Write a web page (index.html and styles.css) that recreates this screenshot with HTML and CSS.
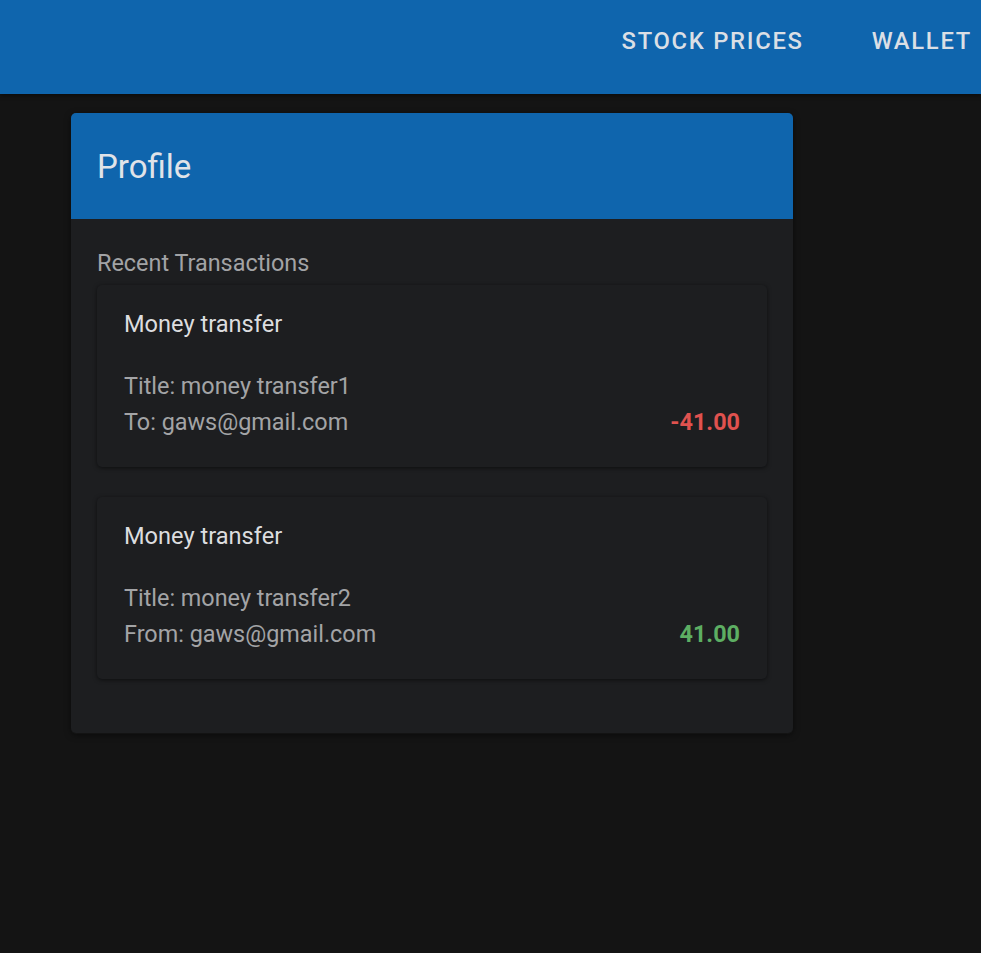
FILE: index.html
```html
<!DOCTYPE html>
<html lang="en">
<head>
<meta charset="utf-8">
<title>Profile</title>
<link rel="stylesheet" href="styles.css">
</head>
<body>
<header class="topbar">
  <nav class="nav">
    <a class="nav-link" href="#">Stock prices</a>
    <a class="nav-link" href="#">Wallet</a>
  </nav>
</header>
<main class="main">
  <section class="profile-card">
    <div class="profile-head"><h1 class="profile-title">Profile</h1></div>
    <div class="profile-body">
      <div class="section-label">Recent Transactions</div>
      <div class="tx-list">
        <article class="tx">
          <div class="tx-type">Money transfer</div>
          <div class="tx-row">
            <div class="tx-info">
              <div>Title: money transfer1</div>
              <div>To: gaws@gmail.com</div>
            </div>
            <div class="tx-amount neg">-41.00</div>
          </div>
        </article>
        <article class="tx">
          <div class="tx-type">Money transfer</div>
          <div class="tx-row">
            <div class="tx-info">
              <div>Title: money transfer2</div>
              <div>From: gaws@gmail.com</div>
            </div>
            <div class="tx-amount pos">41.00</div>
          </div>
        </article>
      </div>
    </div>
  </section>
</main>
</body>
</html>
```
FILE: styles.css
```css
* { box-sizing: border-box; }
html, body { margin: 0; padding: 0; }
body {
  background: #141414;
  font-family: Roboto, "Liberation Sans", sans-serif;
  color: #dcdcdc;
  min-height: 953px;
  overflow: hidden;
}
.topbar {
  height: 94px;
  background: #0f65ad;
  display: flex;
  justify-content: flex-end;
  box-shadow: 0 2px 4px rgba(0,0,0,0.4);
}
.nav {
  display: flex;
  align-items: center;
  height: 82px;
  margin-right: -25px;
}
.nav-link {
  color: #dadfe5;
  text-decoration: none;
  text-transform: uppercase;
  font-weight: 500;
  font-size: 23.8px;
  letter-spacing: 1.7px;
  padding: 0 34px;
}
.main {
  padding: 19px 0 0 71px;
}
.profile-card {
  width: 722px;
  background: #1d1e20;
  border-radius: 5px;
  overflow: hidden;
  box-shadow: 0 2px 6px rgba(0,0,0,0.5), 0 1px 0 rgba(255,255,255,0.04);
}
.profile-head {
  background: #0f65ad;
  height: 106px;
  display: flex;
  align-items: center;
  padding-left: 26px;
  padding-top: 1px;
}
.profile-title {
  margin: 0;
  font-weight: 400;
  font-size: 33px;
  color: #e0e3e8;
}
.profile-body {
  padding: 30px 26px 54px;
}
.section-label {
  font-size: 23.4px;
  color: #a2a3a5;
  line-height: 28px;
}
.tx-list {
  display: flex;
  flex-direction: column;
  gap: 30px;
  margin-top: 8px;
}
.tx {
  background: #1d1e20;
  border-radius: 5px;
  height: 182px;
  padding: 24px 27px 0 27px;
  box-shadow: 0 1px 4px rgba(0,0,0,0.55);
}
.tx-type {
  font-size: 23.6px;
  font-weight: 400;
  color: #dcdddf;
  line-height: 30px;
}
.tx-row {
  display: flex;
  justify-content: space-between;
  align-items: flex-end;
  margin-top: 29px;
}
.tx-info {
  font-size: 23.4px;
  color: #a3a4a6;
  line-height: 36px;
}
.tx-amount {
  font-size: 23.4px;
  font-weight: 700;
  line-height: 36px;
}
.neg { color: #e0524f; }
.pos { color: #5dae63; }
```
